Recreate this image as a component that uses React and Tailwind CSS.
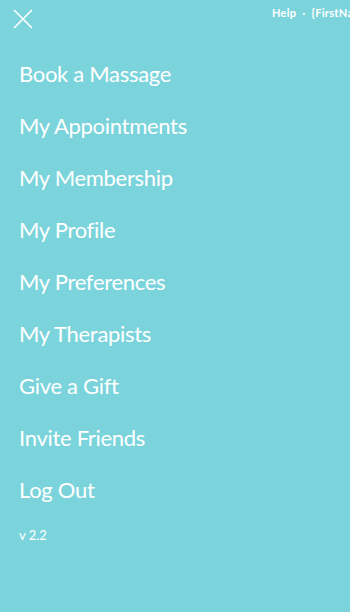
import React from 'react';

const items = [
  'Book a Massage',
  'My Appointments',
  'My Membership',
  'My Profile',
  'My Preferences',
  'My Therapists',
  'Give a Gift',
  'Invite Friends',
  'Log Out',
];

export default function App() {
  return (
    <div
      className="w-[350px] h-[612px] bg-[#7bd4db] text-white overflow-hidden relative"
      style={{ fontFamily: 'Lato, "Noto Sans", sans-serif' }}
    >
      {/* Top bar */}
      <div className="flex items-start justify-between h-[48px]">
        <button className="ml-[12px] mt-[8px] w-[22px] h-[22px] flex items-center justify-center">
          <svg width="22" height="22" viewBox="0 0 22 22" fill="none" stroke="white" strokeWidth="1.6">
            <path d="M2 2 L20 20 M20 2 L2 20" />
          </svg>
        </button>
        <div className="mt-[5px] whitespace-nowrap text-[11px] font-bold tracking-[0.3px] w-[78px] overflow-hidden">
          Help&nbsp; ·&nbsp; {'{FirstName}'}
        </div>
      </div>

      {/* Menu */}
      <nav className="flex flex-col pl-[19px]">
        {items.map((item) => (
          <a key={item} href="#" className="h-[52px] leading-[52px] text-[22px] font-normal tracking-[-0.3px]">
            {item}
          </a>
        ))}
      </nav>

      <div className="pl-[19px] mt-[10px] text-[13px]">v 2.2</div>
    </div>
  );
}
